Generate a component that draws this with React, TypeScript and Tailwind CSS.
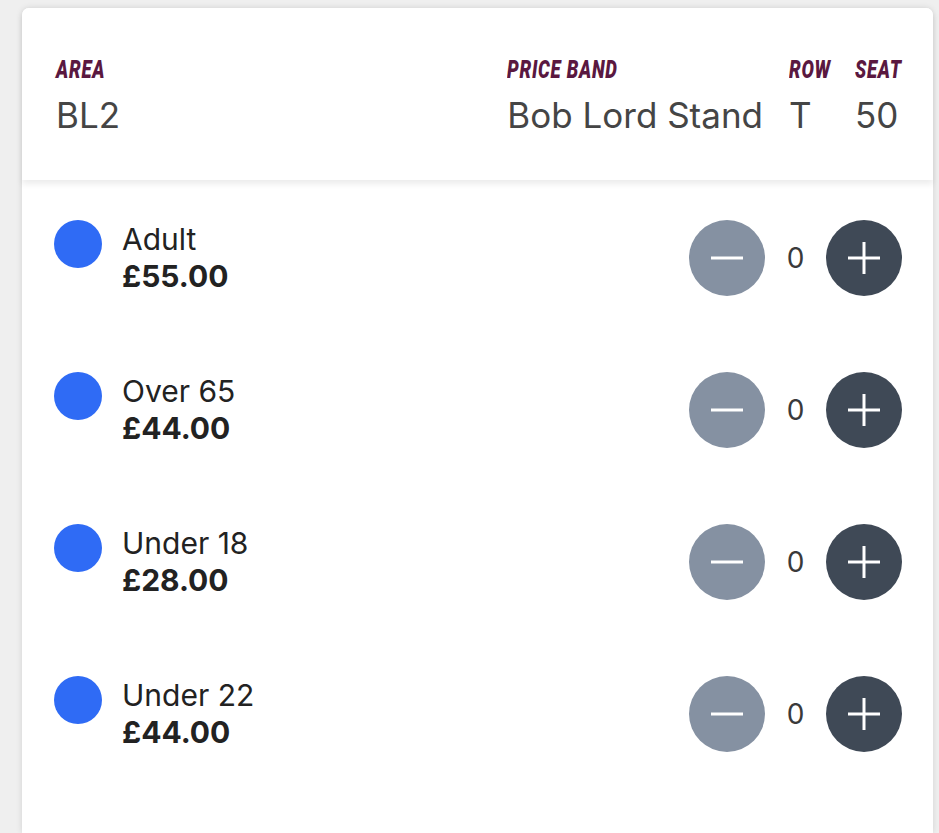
import React from "react";

const labelFont = {
  fontFamily: 'Roboto, "Liberation Sans", sans-serif',
};

function Minus() {
  return (
    <svg width="34" height="34" viewBox="0 0 34 34" fill="none">
      <line x1="1" y1="17" x2="33" y2="17" stroke="white" strokeWidth="3" />
    </svg>
  );
}
function Plus() {
  return (
    <svg width="34" height="34" viewBox="0 0 34 34" fill="none">
      <line x1="1" y1="17" x2="33" y2="17" stroke="white" strokeWidth="3" />
      <line x1="17" y1="1" x2="17" y2="33" stroke="white" strokeWidth="3" />
    </svg>
  );
}

const rows = [
  { name: "Adult", price: "£55.00" },
  { name: "Over 65", price: "£44.00" },
  { name: "Under 18", price: "£28.00" },
  { name: "Under 22", price: "£44.00" },
];

function Label({ children }: { children: React.ReactNode }) {
  return (
    <div className="h-[24px] w-0 whitespace-nowrap overflow-visible">
      <span
        className="inline-block origin-left scale-x-[0.74] text-[25px] leading-[24px] font-black italic tracking-[1px] text-[#5a1840] uppercase"
        style={labelFont}
      >
        {children}
      </span>
    </div>
  );
}

function Value({ children }: { children: React.ReactNode }) {
  return (
    <div className="mt-[13px] text-[35px] leading-[40px] text-[#454545] whitespace-nowrap">{children}</div>
  );
}

export default function App() {
  return (
    <div
      className="min-h-[833px] bg-[#efefef] pl-[22px] pr-[6px] pt-[8px] overflow-hidden"
      style={{ fontFamily: 'Inter, "Liberation Sans", sans-serif' }}
    >
      <div className="bg-white rounded-t-[7px] min-h-[825px] shadow-[0_0_6px_rgba(0,0,0,0.12)]">
        <div className="relative z-10 flex items-start px-[34px] pt-[50px] h-[172px] shadow-[0_4px_6px_rgba(0,0,0,0.08)] rounded-t-[7px] bg-white">
          <div className="flex-1">
            <Label>Area</Label>
            <Value>BL2</Value>
          </div>
          <div className="flex gap-[26px]">
            <div>
              <Label>Price Band</Label>
              <Value>Bob Lord Stand</Value>
            </div>
            <div className="w-[40px]">
              <Label>Row</Label>
              <Value>T</Value>
            </div>
            <div className="w-[44px]">
              <Label>Seat</Label>
              <Value>50</Value>
            </div>
          </div>
        </div>
        <div className="pt-[2px]">
          {rows.map((r) => (
            <div key={r.name} className="flex items-center h-[152px] pl-[32px] pr-[31px]">
              <div className="flex items-start flex-1">
                <div className="w-[48px] h-[48px] rounded-full bg-[#2f6bf5] mt-[-1px]" />
                <div className="ml-[20px] text-[30px] leading-[37px] text-[#222]">
                  <div>{r.name}</div>
                  <div className="font-bold">{r.price}</div>
                </div>
              </div>
              <div className="flex items-center">
                <button className="w-[76px] h-[76px] rounded-full bg-[#8591a2] flex items-center justify-center">
                  <Minus />
                </button>
                <div className="w-[61px] text-center text-[28px] text-[#3a3a3a]">0</div>
                <button className="w-[76px] h-[76px] rounded-full bg-[#3f4956] flex items-center justify-center">
                  <Plus />
                </button>
              </div>
            </div>
          ))}
        </div>
      </div>
    </div>
  );
}
